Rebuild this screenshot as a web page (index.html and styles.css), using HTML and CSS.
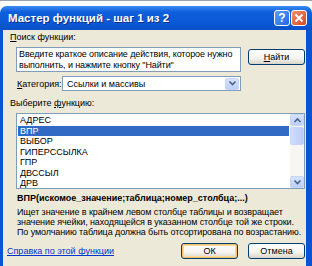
FILE: index.html
```html
<!DOCTYPE html>
<html lang="ru">
<head>
    <meta charset="UTF-8">
    <title>Мастер функций - шаг 1 из 2</title>
    <link rel="stylesheet" href="styles.css">
</head>
<body>

<div class="desk"></div>

<div class="window">
    <div class="titlebar">
        <div class="title">Мастер функций - шаг 1 из 2</div>
        <div class="tbtn help">?</div>
        <div class="tbtn close">
            <svg width="10" height="10" viewBox="0 0 10 10"><path d="M1.5 1.5 L8.5 8.5 M8.5 1.5 L1.5 8.5" stroke="#fff" stroke-width="2"/></svg>
        </div>
    </div>

    <div class="content">
        <div class="label"><u>П</u>оиск функции:</div>
        <div class="search-row">
            <div class="search-box">Введите краткое описание действия, которое нужно выполнить, и нажмите кнопку "Найти"</div>
            <button class="btn"><u>Н</u>айти</button>
        </div>

        <div class="cat-row">
            <span class="cat-label"><u>К</u>атегория:</span>
            <div class="select">
                <span class="select-text">Ссылки и массивы</span>
                <span class="arrow">
                    <svg width="9" height="7" viewBox="0 0 9 7"><polyline points="1.5,1.5 4.5,4.5 7.5,1.5" fill="none" stroke="#4d6185" stroke-width="1.6"/></svg>
                </span>
            </div>
        </div>

        <div class="label list-label">Выберите <u>ф</u>ункцию:</div>
        <div class="listbox">
            <div class="items">
                <div class="item">АДРЕС</div>
                <div class="item selected">ВПР</div>
                <div class="item">ВЫБОР</div>
                <div class="item">ГИПЕРССЫЛКА</div>
                <div class="item">ГПР</div>
                <div class="item">ДВССЫЛ</div>
                <div class="item">ДРВ</div>
            </div>
            <div class="scrollbar">
                <span class="arrow">
                    <svg width="9" height="7" viewBox="0 0 9 7"><polyline points="1.5,5 4.5,2 7.5,5" fill="none" stroke="#4d6185" stroke-width="1.6"/></svg>
                </span>
                <span class="thumb"></span>
                <span class="track"></span>
                <span class="arrow">
                    <svg width="9" height="7" viewBox="0 0 9 7"><polyline points="1.5,1.5 4.5,4.5 7.5,1.5" fill="none" stroke="#4d6185" stroke-width="1.6"/></svg>
                </span>
            </div>
        </div>

        <div class="signature">ВПР(искомое_значение;таблица;номер_столбца;...)</div>
        <div class="desc">Ищет значение в крайнем левом столбце таблицы и возвращает значение ячейки, находящейся в указанном столбце той же строки. По умолчанию таблица должна быть отсортирована по возрастанию.</div>

        <div class="footer">
            <a class="help-link" href="#">Справка по этой функции</a>
            <button class="btn default">ОК</button>
            <button class="btn">Отмена</button>
        </div>
    </div>
</div>

</body>
</html>
```

FILE: styles.css
```css
body {
    margin: 0;
    width: 312px;
    height: 266px;
    overflow: hidden;
    background-color: #f6f6f6;
    font-family: "Liberation Sans", Arial, sans-serif;
    font-size: 9px;
    color: #000;
}
.desk {
    height: 6px;
    background-color: #fdfdfd;
    border-top: 1px solid #9aa3b0;
    box-sizing: border-box;
}
.window {
    height: 260px;
    display: flex;
    flex-direction: column;
}
.titlebar {
    height: 24px;
    display: flex;
    align-items: center;
    padding: 0 5px 0 8px;
    border-radius: 7px 7px 0 0;
    background: linear-gradient(#3a8cf6, #0e5fdc 25%, #0a58d6 70%, #0b50c8);
}
.title {
    flex: 1;
    color: #fff;
    font-weight: bold;
    font-size: 11.5px;
    text-shadow: 1px 1px #0b2f8c;
}
.tbtn {
    width: 14px;
    height: 14px;
    border: 1px solid #fff;
    border-radius: 3px;
    display: flex;
    align-items: center;
    justify-content: center;
    color: #fff;
    font-weight: bold;
    font-size: 12px;
}
.help {
    background: linear-gradient(135deg, #5c9cf8, #2266e6);
    margin-right: 1px;
}
.close {
    background: linear-gradient(135deg, #f09070, #d9461e);
}
.content {
    flex: 1;
    background-color: #ece9d8;
    border-left: 3px solid #0b52d4;
    border-right: 6px solid #0b52d4;
    padding: 2px 1px 0 7px;
    display: flex;
    flex-direction: column;
}
.label {
    line-height: 11px;
}
.search-row {
    display: flex;
    align-items: flex-start;
    margin-top: 4px;
    margin-left: 6px;
}
.search-box {
    width: 225px;
    height: 25px;
    box-sizing: border-box;
    background-color: #fff;
    border: 1px solid #7f9db9;
    padding: 1px 0 0 2px;
    line-height: 10.5px;
    letter-spacing: -0.1px;
}
.btn {
    width: 57px;
    height: 16px;
    padding: 0;
    font-family: inherit;
    font-size: 9px;
    color: #000;
    border: 1px solid #003c74;
    border-radius: 3px;
    background: linear-gradient(#ffffff, #f4f3ee 60%, #d8d4c6);
}
.search-row .btn {
    margin-left: 7px;
    margin-top: 2px;
}
.cat-row {
    display: flex;
    align-items: center;
    margin-top: 4px;
    margin-left: 7px;
}
.cat-label {
    width: 45px;
}
.select {
    width: 179px;
    height: 15px;
    box-sizing: border-box;
    background-color: #fff;
    border: 1px solid #7f9db9;
    display: flex;
    align-items: center;
    padding: 1px;
}
.select-text {
    flex: 1;
    padding-left: 3px;
}
.arrow {
    width: 14px;
    height: 12px;
    box-sizing: border-box;
    border: 1px solid #c6d5f9;
    border-radius: 2px;
    background: linear-gradient(#d6e3fe, #bccffa);
    display: flex;
    align-items: center;
    justify-content: center;
}
.list-label {
    margin-top: 7px;
}
.listbox {
    display: flex;
    height: 76px;
    box-sizing: border-box;
    margin-top: 4px;
    margin-left: 6px;
    background-color: #fff;
    border: 1px solid #7f9db9;
}
.items {
    flex: 1;
    padding: 1px 1px 0 1px;
}
.item {
    line-height: 10.5px;
    padding-left: 2px;
}
.item.selected {
    background-color: #316ac5;
    color: #fff;
}
.scrollbar {
    width: 14px;
    display: flex;
    flex-direction: column;
    background-color: #f7f6f2;
}
.scrollbar .arrow {
    height: 12px;
    width: 14px;
}
.thumb {
    height: 18px;
    margin-top: 1px;
    box-sizing: border-box;
    border: 1px solid #c6d5f9;
    border-radius: 2px;
    background: linear-gradient(90deg, #cfdcfd, #bacdf8);
}
.track {
    flex: 1;
}
.signature {
    font-weight: bold;
    line-height: 11px;
    margin-top: 4px;
    margin-left: 7px;
}
.desc {
    line-height: 9.8px;
    margin-top: 4px;
    margin-left: 7px;
    letter-spacing: -0.1px;
}
.footer {
    display: flex;
    align-items: center;
    margin-top: 6px;
    margin-left: -3px;
}
.help-link {
    flex: 1;
    color: #0033cc;
}
.footer .btn {
    margin-left: 10px;
}
.btn.default {
    box-shadow: inset 0 0 0 1px #f3c36c, inset 0 0 0 2px #f9d99b;
}
```
